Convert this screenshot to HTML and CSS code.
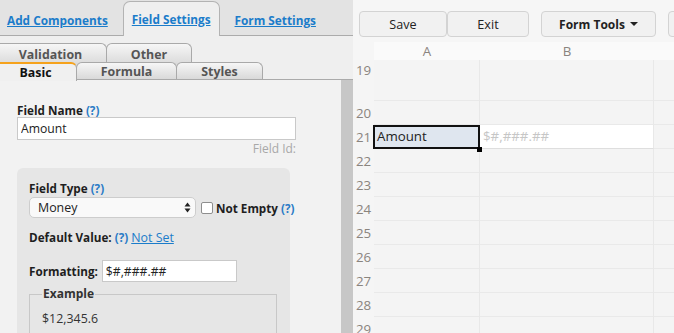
FILE: index.html
```html
<!DOCTYPE html>
<html>
<head>
<meta charset="utf-8">
<title>Form Builder</title>
<link rel="stylesheet" href="styles.css">
</head>
<body>
<div class="app">
  <aside class="panel">
    <nav class="maintabs">
      <a class="mtab first">Add Components</a>
      <a class="mtab active">Field Settings</a>
      <a class="mtab">Form Settings</a>
    </nav>
    <div class="subtabs">
      <div class="strow back">
        <span class="stab first w-validation">Validation</span>
        <span class="stab w-other">Other</span>
      </div>
      <div class="strow front">
        <span class="stab first active w-basic">Basic</span>
        <span class="stab w-formula">Formula</span>
        <span class="stab w-styles">Styles</span>
      </div>
    </div>
    <div class="scrollarea">
      <div class="pbody">
        <div class="lbl">Field Name <span class="help">(?)</span></div>
        <input class="input wide" type="text" value="Amount">
        <div class="fieldid">Field Id:</div>
        <div class="box">
          <div class="lbl">Field Type <span class="help">(?)</span></div>
          <div class="typerow">
            <div class="select">
              <span>Money</span>
              <svg class="arrows" width="7" height="11" viewBox="0 0 7 11"><path d="M3.5 0.5 L6.5 4.5 L0.5 4.5 Z M3.5 10.5 L6.5 6.5 L0.5 6.5 Z" fill="#222"/></svg>
            </div>
            <span class="check"></span>
            <span class="lbl">Not Empty <span class="help">(?)</span></span>
          </div>
          <div class="lbl default">Default Value: <span class="help">(?)</span> <a class="link">Not Set</a></div>
          <div class="fmtrow">
            <span class="lbl">Formatting:</span>
            <input class="input fmt" type="text" value="$#,###.##">
          </div>
          <fieldset class="example">
            <legend>Example</legend>
            <div class="exval">$12,345.6</div>
          </fieldset>
        </div>
      </div>
      <div class="scrollbar"></div>
    </div>
  </aside>
  <main class="sheet">
    <div class="toolbar">
      <div class="btngroup">
        <button class="btn w-save">Save</button>
        <button class="btn w-exit">Exit</button>
      </div>
      <button class="btn bold w-tools">Form Tools <span class="caret"></span></button>
      <button class="btn w-more"></button>
    </div>
    <div class="grid">
      <div class="rn head"></div><div class="ch">A</div><div class="ch">B</div><div class="ch last"></div>
      <div class="rn tall">19</div><div class="c tallc"></div><div class="c tallc"></div><div class="c tallc last"></div>
      <div class="rn">20</div><div class="c"></div><div class="c"></div><div class="c last"></div>
      <div class="rn">21</div><div class="c sel">Amount<span class="handle"></span></div><div class="c white ph">$#,###.##</div><div class="c last"></div>
      <div class="rn">22</div><div class="c"></div><div class="c"></div><div class="c last"></div>
      <div class="rn">23</div><div class="c"></div><div class="c"></div><div class="c last"></div>
      <div class="rn">24</div><div class="c"></div><div class="c"></div><div class="c last"></div>
      <div class="rn">25</div><div class="c"></div><div class="c"></div><div class="c last"></div>
      <div class="rn">26</div><div class="c"></div><div class="c"></div><div class="c last"></div>
      <div class="rn">27</div><div class="c"></div><div class="c"></div><div class="c last"></div>
      <div class="rn">28</div><div class="c"></div><div class="c"></div><div class="c last"></div>
      <div class="rn">29</div><div class="c"></div><div class="c"></div><div class="c last"></div>
    </div>
  </main>
</div>
</body>
</html>
```

FILE: styles.css
```css
* { box-sizing: border-box; }
html, body {
  margin: 0;
  padding: 0;
  width: 674px;
  height: 333px;
  overflow: hidden;
}
body {
  font-family: "Open Sans", "DejaVu Sans", sans-serif;
  font-size: 12.4px;
  color: #222;
  background: #f5f5f5;
}
.app {
  display: flex;
  height: 333px;
  overflow: hidden;
}

/* ---------- left panel ---------- */
.panel {
  width: 353px;
  flex: none;
  display: flex;
  flex-direction: column;
  background: #f2f2f2;
}
.maintabs {
  height: 36px;
  flex: none;
  background: #e3e3e3;
  border-bottom: 1px solid #ababab;
  display: flex;
  align-items: flex-end;
  gap: 6px;
}
.mtab {
  height: 34px;
  margin-bottom: -1px;
  padding: 0 8px;
  display: flex;
  align-items: center;
  border: 1px solid transparent;
  border-bottom: none;
  color: #1b7cca;
  font-weight: 700;
  font-size: 11.8px;
  text-decoration: underline;
  white-space: nowrap;
}
.mtab.first { padding-left: 6px; }
.mtab.active {
  background: #efefef;
  border-color: #b3b3b3;
  border-radius: 7px 7px 0 0;
  height: 35px;
}

.subtabs {
  flex: none;
  background: #efefef;
  padding-top: 7px;
}
.strow {
  display: flex;
}
.strow.back { height: 19px; }
.strow.front {
  height: 18px;
  border-bottom: 1px solid #aaa;
}
.stab {
  margin-left: -1px;
  height: 100%;
  display: flex;
  align-items: center;
  justify-content: center;
  border: 1px solid #a9a9a9;
  border-bottom: none;
  border-radius: 6px 6px 0 0;
  background: linear-gradient(#f6f6f6, #d9d9d9);
  color: #555;
  font-weight: 700;
  font-size: 12.4px;
  white-space: nowrap;
}
.strow.back .stab { height: 22px; }
.stab.first { margin-left: -6px; }
.stab.active {
  background: #f0f0f0;
  border-top: 2px solid #f5a21c;
  color: #111;
  height: 19px;
  margin-bottom: -1px;
  position: relative;
}
.w-validation { width: 113px; }
.w-other { width: 86px; }
.w-basic { width: 83px; }
.w-formula { width: 101px; }
.w-styles { width: 87px; }

.scrollarea {
  flex: 1;
  display: flex;
  min-height: 0;
}
.pbody {
  width: 341px;
  flex: none;
  padding: 21px 0 0 17px;
}
.scrollbar {
  flex: 1;
  background: #c7c7c7;
}
.lbl {
  font-weight: 700;
  font-size: 11.7px;
  line-height: 18px;
  white-space: nowrap;
  color: #1e1e1e;
}
.help {
  color: #2a7bc6;
}
.link {
  color: #1b7cca;
  font-weight: 400;
  font-size: 12.4px;
  text-decoration: underline;
}
.input {
  display: block;
  font-family: inherit;
  font-size: 12.2px;
  color: #222;
  background: #fff;
  border: 1px solid #c9c9c9;
  margin: 0;
  padding: 0 3px;
  outline: none;
}
.input.wide {
  width: 279px;
  height: 23px;
  margin-top: -2px;
}
.fieldid {
  width: 279px;
  text-align: right;
  font-size: 12px;
  color: #a8a8a8;
  line-height: 18px;
}
.box {
  margin-top: 10px;
  width: 273px;
  height: 200px;
  background: #e6e6e6;
  border-radius: 6px 6px 0 0;
  padding: 11px 0 0 12px;
}
.typerow {
  display: flex;
  align-items: center;
  height: 21px;
}
.select {
  width: 167px;
  height: 21px;
  flex: none;
  background: #f9f9f9;
  border: 1px solid #cdcdcd;
  border-radius: 5px;
  display: flex;
  align-items: center;
  justify-content: space-between;
  padding: 0 4px 0 8px;
}
.check {
  flex: none;
  width: 12px;
  height: 12px;
  margin: 0 3px 0 5px;
  background: #fff;
  border: 1px solid #8e8e8e;
  border-radius: 2px;
}
.default {
  margin-top: 10px;
}
.fmtrow {
  margin-top: 13px;
  display: flex;
  align-items: center;
  gap: 4px;
}
.input.fmt {
  width: 135px;
  height: 22px;
}
.example {
  margin: 4px 13px 0 0;
  padding: 8px 12px 10px 12px;
  border: 1px solid #c8c8c8;
  border-bottom: none;
  height: 60px;
}
.example legend {
  padding: 0 1px;
  font-weight: 700;
  font-size: 12px;
  color: #333;
  line-height: 16px;
}
.exval {
  line-height: 18px;
  color: #333;
}

/* ---------- sheet ---------- */
.sheet {
  flex: 1;
  min-width: 0;
  display: flex;
  flex-direction: column;
  background: #f6f6f6;
  overflow: hidden;
}
.toolbar {
  height: 42px;
  flex: none;
  padding: 11px 0 0 6px;
  display: flex;
  align-items: flex-start;
  gap: 12px;
  white-space: nowrap;
}
.btngroup {
  display: flex;
  gap: 0;
}
.btn {
  flex: none;
  height: 26px;
  font-family: inherit;
  font-size: 12.6px;
  color: #222;
  background: #f1f1f1;
  border: 1px solid #d3d3d3;
  border-radius: 4px;
  padding: 0;
  display: flex;
  align-items: center;
  justify-content: center;
  gap: 5px;
}
.btn.bold { font-weight: 700; font-size: 12px; }
.w-save { width: 88px; }
.w-exit { width: 82px; }
.w-tools { width: 115px; }
.w-more { width: 40px; }
.caret {
  width: 0;
  height: 0;
  border-left: 4px solid transparent;
  border-right: 4px solid transparent;
  border-top: 4px solid #222;
}
.grid {
  display: grid;
  grid-template-columns: 21px 106px 174px 1fr;
  grid-auto-rows: 24px;
  grid-template-rows: 18px 41px;
  font-size: 13.3px;
}
.rn {
  background: #f5f5f5;
  color: #8a847e;
  padding-left: 3px;
  line-height: 24px;
}
.rn.head { background: #f6f6f6; }
.rn.tall { line-height: 20px; }
.ch {
  background: #fafafa;
  color: #8a847e;
  text-align: center;
  line-height: 18px;
}
.c {
  background: #f4f4f4;
  border-right: 1px solid #e8e8e8;
  border-bottom: 1px solid #e9e9e9;
  padding-left: 3px;
  line-height: 23px;
  white-space: nowrap;
}
.c.last { border-right: none; }
.c.white {
  background: #fff;
  border-bottom-color: #dedede;
}
.c.ph { color: #c6c6c6; }
.c.sel {
  background: #dfe6ef;
  color: #222;
  position: relative;
}
.c.sel::after {
  content: "";
  position: absolute;
  left: -1px;
  top: 0;
  right: -1px;
  bottom: -1px;
  border: 2px solid #111;
}
.handle {
  position: absolute;
  right: -3px;
  bottom: -4px;
  width: 5px;
  height: 5px;
  background: #000;
  z-index: 1;
}
```
